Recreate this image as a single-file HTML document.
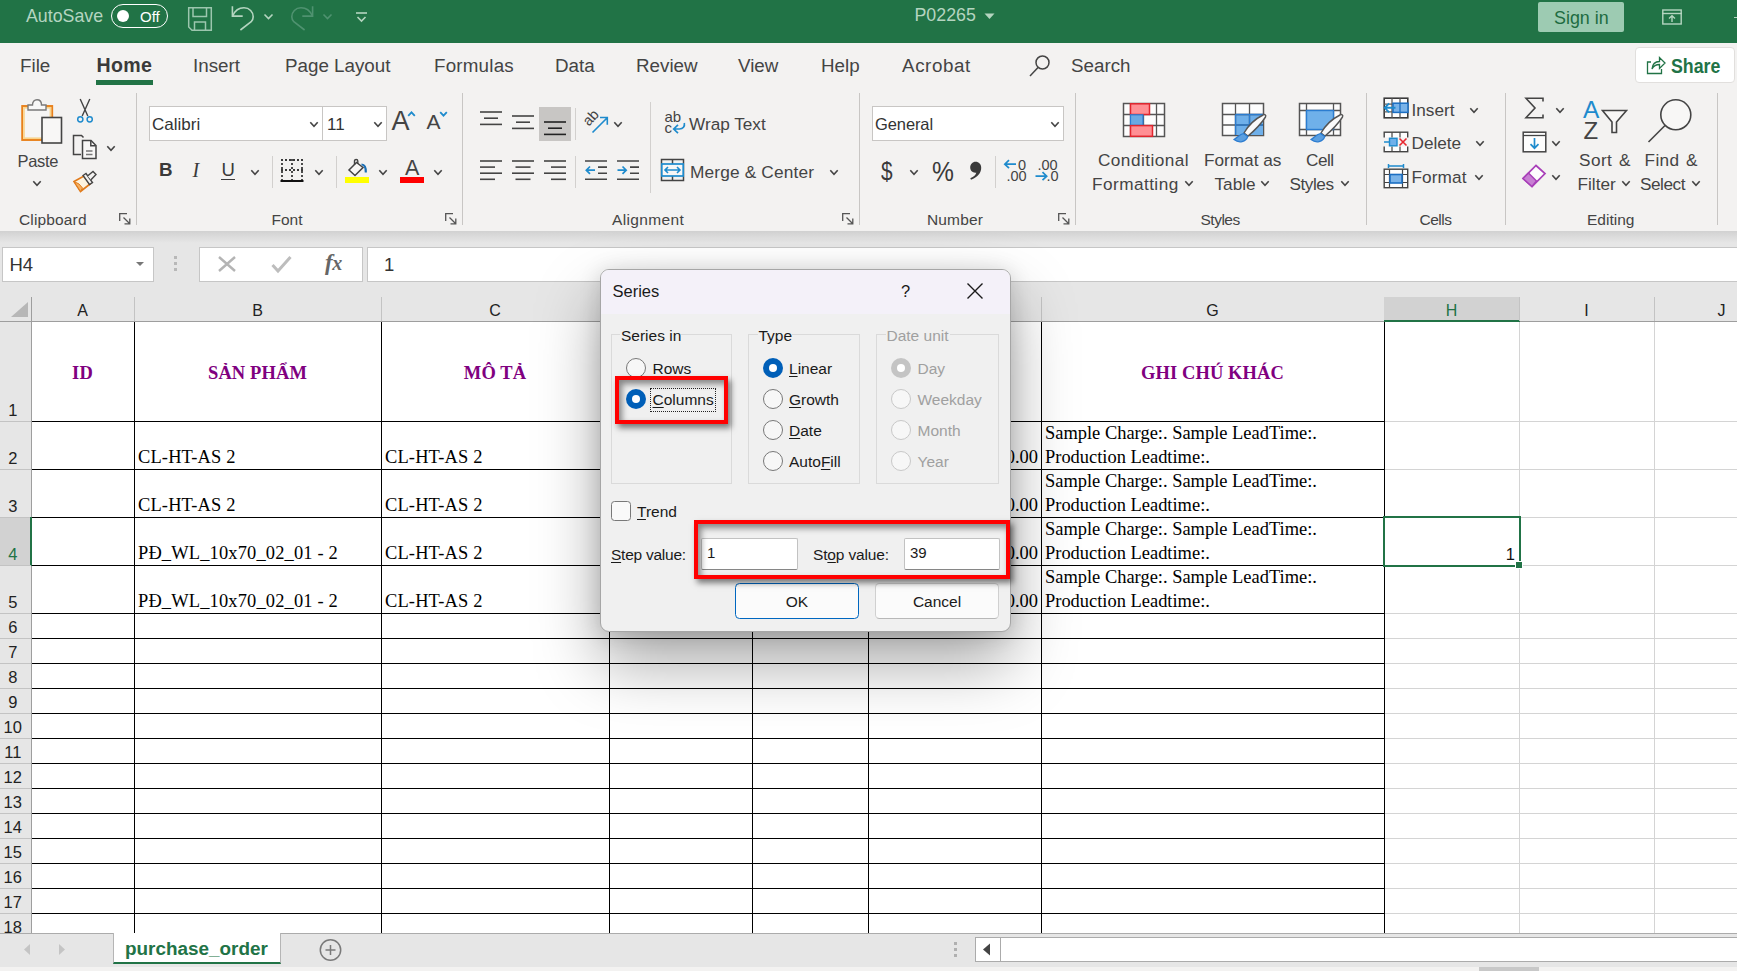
<!DOCTYPE html>
<html>
<head>
<meta charset="utf-8">
<title>Excel</title>
<style>
*{box-sizing:border-box;margin:0;padding:0}
html,body{width:1737px;height:971px;overflow:hidden;background:#e6e6e6;font-family:"Liberation Sans",sans-serif;color:#444}
.abs,.t,svg.i{position:absolute}
.t{white-space:nowrap;line-height:1}
#titlebar{position:absolute;left:0;top:0;width:1737px;height:43px;background:#217346}
#tabs{position:absolute;left:0;top:43px;width:1737px;height:47px;background:#f3f2f1}
#ribbon{position:absolute;left:0;top:90px;width:1737px;height:141px;background:#f3f2f1}
#ribshadow{position:absolute;left:0;top:231px;width:1737px;height:12px;background:linear-gradient(#d1d1d1,#dbdbdb 45%,#e6e6e6)}
.tab{position:absolute;top:57px;font-size:18.8px;color:#444;white-space:nowrap;line-height:1}
.rl{position:absolute;font-size:16.5px;color:#444;white-space:nowrap;line-height:1}
.gl{position:absolute;top:211.6px;font-size:15.5px;color:#444;white-space:nowrap;line-height:1}
.vsep{position:absolute;width:1px;background:#c8c6c4}
.ch{position:absolute;top:297px;height:24px;font-size:16px;color:#222;text-align:center;line-height:27px}
.rh{position:absolute;left:0;width:31px;font-size:16px;color:#222;text-align:left;padding-left:3px;line-height:1}
.hl{position:absolute;height:2px;background:#000}
.vl{position:absolute;width:2px;background:#000}
.gh{position:absolute;height:1px;background:#d4d4d4}
.gv{position:absolute;width:1px;background:#d4d4d4}
.ser{font-family:"Liberation Serif",serif;color:#000;font-size:18.45px}
.hdr{font-family:"Liberation Serif",serif;color:#800080;font-weight:bold;font-size:18.5px;letter-spacing:0.1px}
</style>
</head>
<body>
<div id="root" style="position:absolute;left:0;top:0;width:1737px;height:971px;overflow:hidden">
<div id="titlebar"></div>
<div id="tabs"></div>
<div id="ribbon"></div>
<div id="ribshadow"></div>
<!-- title bar -->
<div class="t" style="left:26px;top:8px;font-size:17.800px;color:#b5d5c0">AutoSave</div>
<div class="abs" style="left:111px;top:4px;width:57px;height:24px;border:1.5px solid #fff;border-radius:12px"></div>
<div class="abs" style="left:117px;top:10px;width:12px;height:12px;border-radius:6px;background:#fff"></div>
<div class="t" style="left:140px;top:9px;font-size:15px;color:#fff">Off</div>
<svg class="i" style="left:187px;top:6px" width="26" height="26" viewBox="0 0 26 26" fill="none" stroke="#9cc6ae" stroke-width="1.5"><path d="M1.7 1.7H24.3V24.3H5L1.7 21Z"/><path d="M6 1.7V10.5H19.5V1.7"/><path d="M7.5 24.3V16H18.5V24.3"/></svg>
<svg class="i" style="left:230px;top:5px" width="26" height="27" viewBox="0 0 26 27" fill="none" stroke="#b5d5c0" stroke-width="1.600"><path d="M2.400 1.300V11.100H12.700"/><path d="M2.800 10.800C5 5.500 9.500 2.800 14 2.800C19.500 2.800 23.200 7 23.200 11.800C23.200 13.800 22.400 15.500 21.200 16.700L10.400 25"/></svg>
<svg class="i" style="left:263px;top:13px" width="11" height="8" viewBox="0 0 11 8" fill="none" stroke="#b5d5c0" stroke-width="1.6"><path d="M1.5 1.5L5.5 5.5L9.5 1.5"/></svg>
<svg class="i" style="left:289px;top:5px" width="26" height="27" viewBox="0 0 26 27" fill="none" stroke="#4f9270" stroke-width="1.600"><path d="M23.600 1.300V11.100H13.300"/><path d="M23.200 10.800C21 5.500 16.500 2.800 12 2.800C6.500 2.800 2.800 7 2.800 11.800C2.800 13.800 3.600 15.500 4.800 16.700L15.600 25"/></svg>
<svg class="i" style="left:322px;top:13px" width="11" height="8" viewBox="0 0 11 8" fill="none" stroke="#4f9270" stroke-width="1.6"><path d="M1.5 1.5L5.5 5.5L9.5 1.5"/></svg>
<svg class="i" style="left:355px;top:11px" width="13" height="12" viewBox="0 0 13 12" fill="none" stroke="#b5d5c0" stroke-width="1.6"><path d="M1 2H12"/><path d="M2.5 6L6.5 10L10.5 6"/></svg>
<div class="t" style="left:914.500px;top:7px;font-size:17.800px;color:#b5d5c0">P02265</div>
<svg class="i" style="left:984px;top:13px" width="11" height="7" viewBox="0 0 11 7"><path d="M0.500 0.500H10.500L5.500 6Z" fill="#b5d5c0"/></svg>
<div class="abs" style="left:1538px;top:2px;width:86px;height:30px;background:#9dcbb2;border-radius:2px"></div>
<div class="t" style="left:1554px;top:9.500px;font-size:17.900px;color:#1e6c41">Sign in</div>
<svg class="i" style="left:1661px;top:9px" width="22" height="16" viewBox="0 0 22 16" fill="none" stroke="#b5d5c0" stroke-width="1.400"><rect x="1.800" y="1" width="18.400" height="14"/><path d="M1 4.500H21"/><path d="M11 13V7M8 9.500L11 6.800L14 9.500"/></svg>
<div class="abs" style="left:1734px;top:16.500px;width:3px;height:1.500px;background:#b5d5c0"></div>

<!-- tabs -->
<div class="tab" style="left:20px">File</div>
<div class="tab" style="left:96px;font-weight:bold;color:#3a3a3a;font-size:19.600px;top:56px;letter-spacing:0.300px;left:96.500px">Home</div>
<div class="abs" style="left:96px;top:80px;width:57px;height:5px;background:#217346"></div>
<div class="tab" style="left:193px">Insert</div>
<div class="tab" style="left:285px">Page Layout</div>
<div class="tab" style="left:434px;letter-spacing:0.200px">Formulas</div>
<div class="tab" style="left:555px">Data</div>
<div class="tab" style="left:636px">Review</div>
<div class="tab" style="left:738px">View</div>
<div class="tab" style="left:821px">Help</div>
<div class="tab" style="left:902px;letter-spacing:0.600px">Acrobat</div>
<svg class="i" style="left:1028px;top:54px" width="24" height="24" viewBox="0 0 24 24" fill="none" stroke="#444" stroke-width="1.5"><circle cx="14.500" cy="8.500" r="6.500"/><path d="M10 13.500L2 22"/></svg>
<div class="tab" style="left:1071px">Search</div>
<div class="abs" style="left:1635px;top:47px;width:100px;height:36px;background:#fff;border:1px solid #e1dfdd;border-radius:4px"></div>
<svg class="i" style="left:1645px;top:54px" width="22" height="22" viewBox="0 0 22 22" fill="none" stroke="#217346" stroke-width="1.300"><path d="M6 8H2.500V19.500H16.500V15"/><path d="M7 15C7.500 10 10.500 7.500 14.500 7.500V3.500L20 9L14.500 14.500V10.500C11 10.500 8.500 12 7 15Z"/></svg>
<div class="tab" style="left:1671px;font-weight:bold;color:#217346;font-size:19.500px;top:57px;transform:scaleX(0.910);transform-origin:left">Share</div>

<!-- clipboard -->
<svg class="i" style="left:20px;top:98px" width="44" height="47" viewBox="0 0 44 47" fill="none">
<rect x="2.2" y="8" width="30" height="34" fill="#fdf3df" stroke="#e8801a" stroke-width="1.9"/>
<rect x="4" y="9.800" width="26.400" height="30.400" fill="#f6f5f4" stroke="#f9d48c" stroke-width="1.6"/>
<path d="M8 12V7H12.500C12.500 3.500 14.500 1.800 17 1.800C19.500 1.800 21.500 3.500 21.500 7H26V12Z" fill="#f8f8f8" stroke="#7a7a7a" stroke-width="1.4"/>
<rect x="22" y="19.500" width="19.500" height="25.500" fill="#f8f7f6" stroke="#444" stroke-width="1.6"/>
</svg>
<div class="rl" style="left:17.5px;top:152.5px;font-size:16.5px;letter-spacing:-0.300px">Paste</div>
<svg class="i" style="left:32px;top:180px" width="10" height="7" viewBox="0 0 10 7" fill="none" stroke="#444" stroke-width="1.6"><path d="M1.3 1.3L5.0 5.3L8.7 1.3"/></svg>
<svg class="i" style="left:76px;top:98px" width="18" height="26" viewBox="0 0 18 26" fill="none">
<path d="M4.200 1L11.800 18M13.800 1L6.200 18" stroke="#444" stroke-width="1.4"/>
<circle cx="4.300" cy="21.300" r="2.600" stroke="#1e8bcd" stroke-width="1.5"/><circle cx="13.700" cy="21.300" r="2.600" stroke="#1e8bcd" stroke-width="1.5"/>
</svg>
<svg class="i" style="left:72px;top:134px" width="26" height="26" viewBox="0 0 26 26" fill="none" stroke="#444" stroke-width="1.5">
<path d="M9 20.500H1.500V1.500H9.500L11.500 3.500"/>
<path d="M10.500 6.500H19L24 11.500V24.500H10.500Z" fill="#f8f7f6"/><path d="M18.800 6.800V11.700H23.700"/>
<path d="M14 17H20.500M14 20.500H20.500" stroke="#777" stroke-width="1.3"/>
</svg>
<svg class="i" style="left:106px;top:145px" width="10" height="7" viewBox="0 0 10 7" fill="none" stroke="#444" stroke-width="1.6"><path d="M1.3 1.3L5.0 5.3L8.7 1.3"/></svg>
<svg class="i" style="left:72px;top:170px" width="27" height="24" viewBox="0 0 27 24" fill="none">
<path d="M2 11.500L12 6L18 14L8.500 21.500Z" fill="#fdf3df" stroke="#e07a1a" stroke-width="1.6"/>
<path d="M2 11.500L7 14L10.500 18L8.500 21.500Z" fill="#f5b062" stroke="#e07a1a" stroke-width="1"/>
<path d="M11 5.500L14 3.500L20.500 12.500L17.500 14.500Z" fill="#f3f2f1" stroke="#444" stroke-width="1.4"/>
<path d="M15.500 6L21 1.500L24 4.500L19 9.800" fill="#f3f2f1" stroke="#444" stroke-width="1.4"/>
</svg>
<div class="gl" style="left:19px;letter-spacing:0.150px">Clipboard</div>
<svg class="i" style="left:119px;top:213px" width="12" height="12" viewBox="0 0 12 12" fill="none" stroke="#555" stroke-width="1.3"><path d="M0.700 8V0.700H8"/><path d="M4.500 4.500L10.800 10.800M10.800 5.500V10.800H5.500"/></svg>
<div class="vsep" style="left:136px;top:93px;height:132px;background:#c8c6c4"></div>
<!-- font -->
<div class="abs" style="left:149px;top:106px;width:174px;height:35px;background:#fff;border:1px solid #c8c6c4"></div>
<div class="abs" style="left:322px;top:106px;width:65px;height:35px;background:#fff;border:1px solid #c8c6c4"></div>
<div class="rl" style="left:152px;top:116px;font-size:17px;color:#333">Calibri</div>
<svg class="i" style="left:309px;top:121px" width="10" height="7" viewBox="0 0 10 7" fill="none" stroke="#444" stroke-width="1.6"><path d="M1.3 1.3L5.0 5.3L8.7 1.3"/></svg>
<div class="rl" style="left:327px;top:116px;font-size:17px;color:#333">11</div>
<svg class="i" style="left:373px;top:121px" width="10" height="7" viewBox="0 0 10 7" fill="none" stroke="#444" stroke-width="1.6"><path d="M1.3 1.3L5.0 5.3L8.7 1.3"/></svg>
<div class="t" style="left:391.500px;top:107.500px;font-size:27px;color:#444">A</div>
<svg class="i" style="left:407px;top:110.500px" width="9" height="6" viewBox="0 0 9 6" fill="none" stroke="#1e8bcd" stroke-width="1.8"><path d="M1.200 4.800L4.500 1.300L7.800 4.800"/></svg>
<div class="t" style="left:426.500px;top:111px;font-size:21px;color:#444">A</div>
<svg class="i" style="left:439px;top:110.500px" width="9" height="6" viewBox="0 0 9 6" fill="none" stroke="#1e8bcd" stroke-width="1.8"><path d="M1.200 1.200L4.500 4.700L7.800 1.200"/></svg>
<div class="t" style="left:159px;top:161px;font-size:18.800px;font-weight:bold;color:#3a3a3a">B</div>
<div class="t" style="left:192.500px;top:160px;font-size:20px;font-style:italic;font-family:'Liberation Serif',serif;color:#3a3a3a">I</div>
<div class="t" style="left:221.500px;top:160.500px;font-size:18.500px;color:#3a3a3a">U</div>
<div class="abs" style="left:221px;top:178.500px;width:14px;height:1.500px;background:#3a3a3a"></div>
<svg class="i" style="left:250px;top:169px" width="10" height="7" viewBox="0 0 10 7" fill="none" stroke="#444" stroke-width="1.6"><path d="M1.3 1.3L5.0 5.3L8.7 1.3"/></svg>
<div class="vsep" style="left:272px;top:156px;height:32px;background:#d2d0ce"></div>
<svg class="i" style="left:280px;top:158px" width="25" height="25" viewBox="0 0 25 25" fill="none">
<path d="M1 2H23M2 1V23M22 1V23M12 1V23M1 12H23" stroke="#3a3a3a" stroke-width="1.800" stroke-dasharray="2 2"/>
<path d="M0.500 23H23.500" stroke="#111" stroke-width="2"/>
</svg>
<svg class="i" style="left:314px;top:169px" width="10" height="7" viewBox="0 0 10 7" fill="none" stroke="#444" stroke-width="1.6"><path d="M1.3 1.3L5.0 5.3L8.7 1.3"/></svg>
<div class="vsep" style="left:336px;top:156px;height:32px;background:#d2d0ce"></div>
<svg class="i" style="left:346px;top:158px" width="24" height="19" viewBox="0 0 24 19" fill="none">
<path d="M10.500 4.500L3 12L9 17.500L17 9.500L10.500 4.500Z" stroke="#444" stroke-width="1.500" fill="#f8f7f6"/>
<path d="M8.500 7V3C8.500 1 11.800 1 11.800 3V6" stroke="#444" stroke-width="1.400"/>
<path d="M15.500 6.500C18.500 6.500 20 9 19.800 14.500" stroke="#1b6fb5" stroke-width="2.200"/>
</svg>
<div class="abs" style="left:345px;top:177px;width:24px;height:6px;background:#ffff00"></div>
<svg class="i" style="left:378px;top:169px" width="10" height="7" viewBox="0 0 10 7" fill="none" stroke="#444" stroke-width="1.6"><path d="M1.3 1.3L5.0 5.3L8.7 1.3"/></svg>
<div class="t" style="left:405px;top:157.500px;font-size:21.500px;color:#444">A</div>
<div class="abs" style="left:400px;top:177px;width:24px;height:6px;background:#ff0000"></div>
<svg class="i" style="left:433px;top:169px" width="10" height="7" viewBox="0 0 10 7" fill="none" stroke="#444" stroke-width="1.6"><path d="M1.3 1.3L5.0 5.3L8.7 1.3"/></svg>
<div class="gl" style="left:271.5px;">Font</div>
<svg class="i" style="left:445px;top:213px" width="12" height="12" viewBox="0 0 12 12" fill="none" stroke="#555" stroke-width="1.3"><path d="M0.700 8V0.700H8"/><path d="M4.500 4.500L10.800 10.800M10.800 5.500V10.800H5.500"/></svg>
<div class="vsep" style="left:462px;top:93px;height:132px;background:#c8c6c4"></div>
<!-- alignment -->
<svg class="i" style="left:480px;top:110.7px" width="22" height="15" viewBox="0 0 22 15" stroke="#444" stroke-width="1.6"><path d="M0.0 1.0H22.0"/><path d="M4.0 7.2H18.0"/><path d="M0.0 13.4H22.0"/></svg>
<svg class="i" style="left:512px;top:114.5px" width="22" height="15" viewBox="0 0 22 15" stroke="#444" stroke-width="1.6"><path d="M0.0 1.0H22.0"/><path d="M4.0 7.2H18.0"/><path d="M0.0 13.4H22.0"/></svg>
<div class="abs" style="left:539px;top:107px;width:32px;height:34px;background:#c8c6c4"></div>
<svg class="i" style="left:544px;top:120.5px" width="22" height="15" viewBox="0 0 22 15" stroke="#222" stroke-width="1.6"><path d="M0.0 1.0H22.0"/><path d="M4.0 7.2H18.0"/><path d="M0.0 13.4H22.0"/></svg>
<div class="vsep" style="left:575px;top:108px;height:32px;background:#d2d0ce"></div>
<svg class="i" style="left:583px;top:109px" width="27" height="26" viewBox="0 0 27 26" fill="none">
<text transform="translate(5.800 17.800) rotate(-47)" font-family="Liberation Sans" font-size="14.500" fill="#444">ab</text>
<path d="M9.500 23.500L24 9M17 8.500H24.300V15.800" stroke="#1e8bcd" stroke-width="1.600"/>
</svg>
<svg class="i" style="left:613px;top:121px" width="10" height="7" viewBox="0 0 10 7" fill="none" stroke="#444" stroke-width="1.6"><path d="M1.3 1.3L5.0 5.3L8.7 1.3"/></svg>
<div class="vsep" style="left:650px;top:102px;height:91px;background:#d2d0ce"></div>
<svg class="i" style="left:663px;top:108px" width="24" height="28" viewBox="0 0 24 28" fill="none">
<text x="1.500" y="13.500" font-family="Liberation Sans" font-size="15" fill="#444">ab</text>
<text x="1.500" y="25" font-family="Liberation Sans" font-size="15" fill="#444">c</text>
<path d="M21.300 15C22 18.500 20 21 16.500 21H11M15 16.800L10.700 21L15 25.200" stroke="#1e8bcd" stroke-width="1.700"/>
</svg>
<div class="rl" style="left:689px;top:116px;font-size:17.2px;">Wrap Text</div>
<svg class="i" style="left:480px;top:159.8px" width="22" height="21" viewBox="0 0 22 21" stroke="#444" stroke-width="1.6"><path d="M0 1.0H22"/><path d="M0 7.1H15"/><path d="M0 13.2H22"/><path d="M0 19.3H15"/></svg>
<svg class="i" style="left:512px;top:159.8px" width="22" height="21" viewBox="0 0 22 21" stroke="#444" stroke-width="1.6"><path d="M0.0 1.0H22.0"/><path d="M3.5 7.1H18.5"/><path d="M0.0 13.2H22.0"/><path d="M3.5 19.3H18.5"/></svg>
<svg class="i" style="left:544px;top:159.8px" width="22" height="21" viewBox="0 0 22 21" stroke="#444" stroke-width="1.6"><path d="M0 1.0H22"/><path d="M7 7.1H22"/><path d="M0 13.2H22"/><path d="M7 19.3H22"/></svg>
<div class="vsep" style="left:575px;top:156px;height:32px;background:#d2d0ce"></div>
<svg class="i" style="left:585px;top:159.800px" width="22" height="21" viewBox="0 0 22 21" fill="none" stroke="#444" stroke-width="1.600">
<path d="M0 1H22M13 7.100H22M13 13.200H22M0 19.300H22"/><path d="M10 10.200H1.500M5 6.500L1.300 10.200L5 13.900" stroke="#1e8bcd" stroke-width="1.700"/></svg>
<svg class="i" style="left:617px;top:159.800px" width="22" height="21" viewBox="0 0 22 21" fill="none" stroke="#444" stroke-width="1.600">
<path d="M0 1H22M13 7.100H22M13 13.200H22M0 19.300H22"/><path d="M0.500 10.200H9M5.500 6.500L9.200 10.200L5.500 13.900" stroke="#1e8bcd" stroke-width="1.700"/></svg>
<svg class="i" style="left:660px;top:158px" width="25" height="24" viewBox="0 0 25 24" fill="none">
<rect x="1.500" y="1.500" width="22" height="21" stroke="#444" stroke-width="1.500"/>
<path d="M12.500 1.500V6M12.500 18V22.500" stroke="#444" stroke-width="1.500"/>
<rect x="1.800" y="6" width="21.400" height="12" fill="#f8f7f6" stroke="#1e8bcd" stroke-width="1.700"/>
<path d="M5 12H20M8 9L5 12L8 15M17 9L20 12L17 15" stroke="#1e8bcd" stroke-width="1.600"/>
</svg>
<div class="rl" style="left:690px;top:164px;font-size:17.3px;letter-spacing:0.150px">Merge &amp; Center</div>
<svg class="i" style="left:829px;top:169px" width="10" height="7" viewBox="0 0 10 7" fill="none" stroke="#444" stroke-width="1.6"><path d="M1.3 1.3L5.0 5.3L8.7 1.3"/></svg>
<div class="gl" style="left:612px;letter-spacing:0.350px">Alignment</div>
<svg class="i" style="left:842px;top:213px" width="12" height="12" viewBox="0 0 12 12" fill="none" stroke="#555" stroke-width="1.3"><path d="M0.700 8V0.700H8"/><path d="M4.500 4.500L10.800 10.800M10.800 5.500V10.800H5.500"/></svg>
<div class="vsep" style="left:859px;top:93px;height:132px;background:#c8c6c4"></div>
<!-- number -->
<div class="abs" style="left:872px;top:106px;width:192px;height:35px;background:#fff;border:1px solid #c8c6c4"></div>
<div class="rl" style="left:875px;top:116px;font-size:16.5px;color:#333;letter-spacing:-0.100px">General</div>
<svg class="i" style="left:1050px;top:121px" width="10" height="7" viewBox="0 0 10 7" fill="none" stroke="#444" stroke-width="1.6"><path d="M1.3 1.3L5.0 5.3L8.7 1.3"/></svg>
<div class="t" style="left:881px;top:157.500px;font-size:26px;color:#3a3a3a;transform:scaleX(0.800);transform-origin:left">$</div>
<svg class="i" style="left:909px;top:169px" width="10" height="7" viewBox="0 0 10 7" fill="none" stroke="#444" stroke-width="1.6"><path d="M1.3 1.3L5.0 5.3L8.7 1.3"/></svg>
<div class="t" style="left:931.500px;top:157.500px;font-size:28px;color:#3a3a3a;transform:scaleX(0.880);transform-origin:left">%</div>
<svg class="i" style="left:969px;top:161px" width="14" height="20" viewBox="0 0 14 20"><path d="M6.600 0.800C9.800 0.800 12.200 3.300 12.200 6.800C12.200 12 8.500 16.500 2 18.700L1.300 17.300C5 15.500 6.800 13.700 7.300 11.700C4 12.300 1.200 10 1.200 6.600C1.200 3.300 3.500 0.800 6.600 0.800Z" fill="#3a3a3a"/></svg>
<div class="vsep" style="left:995px;top:156px;height:32px;background:#d2d0ce"></div>
<svg class="i" style="left:1003px;top:157px" width="26" height="27" viewBox="0 0 26 27" fill="none">
<path d="M13 7.200H2M6 3.200L1.800 7.200L6 11.200" stroke="#1e8bcd" stroke-width="1.700"/>
<text x="15" y="12.500" font-family="Liberation Sans" font-size="14.500" fill="#444">0</text>
<text x="3.500" y="24.300" font-family="Liberation Sans" font-size="14.500" fill="#444">.00</text>
</svg>
<svg class="i" style="left:1034px;top:157px" width="28" height="27" viewBox="0 0 28 27" fill="none">
<text x="3.500" y="12.500" font-family="Liberation Sans" font-size="14.500" fill="#444">.00</text>
<path d="M1.500 19.200H12.500M8.500 15.200L12.700 19.200L8.500 23.200" stroke="#1e8bcd" stroke-width="1.700"/>
<text x="12.500" y="24.300" font-family="Liberation Sans" font-size="14.500" fill="#444">.0</text>
</svg>
<div class="gl" style="left:927px;letter-spacing:0.150px">Number</div>
<svg class="i" style="left:1058px;top:213px" width="12" height="12" viewBox="0 0 12 12" fill="none" stroke="#555" stroke-width="1.3"><path d="M0.700 8V0.700H8"/><path d="M4.500 4.500L10.800 10.800M10.800 5.500V10.800H5.500"/></svg>
<div class="vsep" style="left:1075px;top:93px;height:132px;background:#c8c6c4"></div>
<!-- styles -->
<svg class="i" style="left:1122px;top:102px" width="44" height="36" viewBox="0 0 44 36" fill="none">
<rect x="1.500" y="1.500" width="41" height="33" fill="#fdfdfd" stroke="#555" stroke-width="1.500"/>
<path d="M1.500 12.500H42.500M1.500 23.500H42.500M8.500 1.500V34.500M21.500 1.500V34.500M34.500 1.500V34.500" stroke="#555" stroke-width="1.300"/>
<rect x="8.500" y="1.800" width="19" height="10.700" fill="#ff8f94" stroke="#e0262e" stroke-width="1.500"/>
<rect x="8.500" y="12.800" width="12.500" height="10.500" fill="#6aa9e3" stroke="#2b7cd0" stroke-width="1.200"/>
<rect x="8.500" y="23.600" width="22" height="10.700" fill="#ff8f94" stroke="#e0262e" stroke-width="1.500"/>
</svg>
<div class="rl" style="left:1098px;top:151.6px;font-size:17.2px;letter-spacing:0.450px">Conditional</div>
<div class="rl" style="left:1092px;top:175.6px;font-size:17.2px;letter-spacing:0.450px">Formatting</div>
<svg class="i" style="left:1184px;top:179.5px" width="10" height="7" viewBox="0 0 10 7" fill="none" stroke="#444" stroke-width="1.6"><path d="M1.3 1.3L5.0 5.3L8.7 1.3"/></svg>
<svg class="i" style="left:1221px;top:102px" width="48" height="44" viewBox="0 0 48 44" fill="none">
<rect x="1.500" y="1.500" width="41" height="32" fill="#fdfdfd" stroke="#555" stroke-width="1.500"/>
<rect x="14.500" y="12.500" width="27.500" height="20.500" fill="#6fb0ea"/>
<path d="M1.500 12.500H42.500M1.500 23H42.500M14.500 1.500V33.500M28.500 1.500V33.500" stroke="#555" stroke-width="1.300"/>
<path d="M14.500 12.500H42M14.500 23H42M14.500 12.500V33M28.500 12.500V33" stroke="#2b7cd0" stroke-width="1.300"/>
<path d="M42 13C34 17 27 24 23 31L27 34C33 29 40 22 44.5 15C45.5 13 43.5 12 42 13Z" fill="#fafafa" stroke="#555" stroke-width="1.400"/>
<path d="M22.5 31.5C19 32 17 35 13 37.5C18 41.5 25 40 26.8 34.5Z" fill="#5b9fe0" stroke="#2b7cd0" stroke-width="1.200"/>
</svg>
<div class="rl" style="left:1204px;top:151.6px;font-size:17.2px;">Format as</div>
<div class="rl" style="left:1214.5px;top:175.6px;font-size:17.2px;">Table</div>
<svg class="i" style="left:1259.5px;top:179.5px" width="10" height="7" viewBox="0 0 10 7" fill="none" stroke="#444" stroke-width="1.6"><path d="M1.3 1.3L5.0 5.3L8.7 1.3"/></svg>
<svg class="i" style="left:1298px;top:102px" width="48" height="44" viewBox="0 0 48 44" fill="none">
<rect x="1.500" y="1.500" width="41" height="32" fill="#fdfdfd" stroke="#555" stroke-width="1.500"/>
<path d="M1.500 8.500H42.500M1.500 27.500H42.500M8.500 1.500V33.500M35.500 1.500V33.500" stroke="#555" stroke-width="1.300"/>
<rect x="8.500" y="8.500" width="27" height="19" fill="#6fb0ea" stroke="#2b7cd0" stroke-width="1.400"/>
<path d="M42 13C34 17 27 24 23 31L27 34C33 29 40 22 44.5 15C45.5 13 43.5 12 42 13Z" fill="#fafafa" stroke="#555" stroke-width="1.400"/>
<path d="M22.5 31.5C19 32 17 35 13 37.5C18 41.5 25 40 26.8 34.5Z" fill="#5b9fe0" stroke="#2b7cd0" stroke-width="1.200"/>
</svg>
<div class="rl" style="left:1306px;top:151.6px;font-size:17.2px;letter-spacing:-0.500px">Cell</div>
<div class="rl" style="left:1289.5px;top:175.6px;font-size:17.2px;letter-spacing:-0.450px">Styles</div>
<svg class="i" style="left:1339.5px;top:179.5px" width="10" height="7" viewBox="0 0 10 7" fill="none" stroke="#444" stroke-width="1.6"><path d="M1.3 1.3L5.0 5.3L8.7 1.3"/></svg>
<div class="gl" style="left:1200.5px;letter-spacing:-0.500px">Styles</div>
<div class="vsep" style="left:1366px;top:93px;height:132px;background:#c8c6c4"></div>
<!-- cells -->
<svg class="i" style="left:1383px;top:97px" width="26" height="22" viewBox="0 0 26 22" fill="none">
<rect x="1.200" y="1.200" width="23.600" height="19.600" stroke="#3b3b3b" stroke-width="1.600" fill="#fdfdfd"/>
<path d="M1.200 7.200H24.800M1.200 14.800H24.800M9 1.200V20.800M17 1.200V20.800" stroke="#5a5a5a" stroke-width="1.300"/>
<rect x="10" y="6.200" width="15" height="9.200" fill="#7ab3e8" stroke="#1b6ec2" stroke-width="1.500"/>
<path d="M17 6.200V15.400" stroke="#1b6ec2" stroke-width="1.300"/>
<path d="M12.500 10.800H2M6.200 6.300L1.700 10.800L6.200 15.300" stroke="#1e8bcd" stroke-width="1.900"/>
</svg>
<div class="rl" style="left:1411.5px;top:101.5px;font-size:17.2px;">Insert</div>
<svg class="i" style="left:1469px;top:106.5px" width="10" height="7" viewBox="0 0 10 7" fill="none" stroke="#444" stroke-width="1.6"><path d="M1.3 1.3L5.0 5.3L8.7 1.3"/></svg>
<svg class="i" style="left:1383px;top:131px" width="26" height="22" viewBox="0 0 26 22" fill="none">
<rect x="1.200" y="1.200" width="23.500" height="19.500" stroke="#444" stroke-width="1.400" fill="#fdfdfd"/>
<path d="M1.200 7.500H24.700M1.200 14.500H24.700M9 1.200V20.700M17 1.200V20.700" stroke="#444" stroke-width="1.200"/>
<rect x="0" y="6.500" width="26" height="9" fill="#f3f2f1"/>
<rect x="6.500" y="7.300" width="7.500" height="7.500" fill="#6fb0ea" stroke="#1e8bcd" stroke-width="1.400"/>
<path d="M1 11H6.500" stroke="#1e8bcd" stroke-width="1.500"/>
<path d="M16.500 7.500L23.500 14.500M23.500 7.500L16.500 14.500" stroke="#e8262e" stroke-width="1.600"/>
</svg>
<div class="rl" style="left:1411.5px;top:135px;font-size:17.2px;">Delete</div>
<svg class="i" style="left:1475px;top:140px" width="10" height="7" viewBox="0 0 10 7" fill="none" stroke="#444" stroke-width="1.6"><path d="M1.3 1.3L5.0 5.3L8.7 1.3"/></svg>
<svg class="i" style="left:1383px;top:162.500px" width="26" height="26" viewBox="0 0 26 26" fill="none">
<path d="M5.500 1V5M20.500 1V5M5.500 3H20.500" stroke="#1e8bcd" stroke-width="1.500"/>
<rect x="1.200" y="6.200" width="23.500" height="18.500" stroke="#444" stroke-width="1.400" fill="#fdfdfd"/>
<path d="M1.200 11.500H24.700M1.200 19.500H24.700M6.500 6.200V24.700M19.500 6.200V24.700" stroke="#444" stroke-width="1.200"/>
<rect x="7" y="11.500" width="12" height="8.500" fill="#7ab3e8" stroke="#1b6ec2" stroke-width="1.600"/>
</svg>
<div class="rl" style="left:1411.5px;top:169px;font-size:17.2px;letter-spacing:0.100px">Format</div>
<svg class="i" style="left:1474px;top:174px" width="10" height="7" viewBox="0 0 10 7" fill="none" stroke="#444" stroke-width="1.6"><path d="M1.3 1.3L5.0 5.3L8.7 1.3"/></svg>
<div class="gl" style="left:1419.5px;letter-spacing:-0.500px">Cells</div>
<div class="vsep" style="left:1505px;top:93px;height:132px;background:#c8c6c4"></div>
<!-- editing -->
<svg class="i" style="left:1524px;top:97px" width="21" height="22" viewBox="0 0 21 22" fill="none" stroke="#444" stroke-width="1.600"><path d="M19 4.500V1.200H2L11 11L2 20.800H19V17.500"/></svg>
<svg class="i" style="left:1555px;top:106.5px" width="10" height="7" viewBox="0 0 10 7" fill="none" stroke="#444" stroke-width="1.6"><path d="M1.3 1.3L5.0 5.3L8.7 1.3"/></svg>
<svg class="i" style="left:1522px;top:131px" width="25" height="22" viewBox="0 0 25 22" fill="none">
<rect x="1.200" y="1.200" width="22.600" height="19.600" stroke="#444" stroke-width="1.500" fill="#fdfdfd"/><path d="M1.200 4.500H23.800" stroke="#444" stroke-width="1.300"/>
<path d="M12.500 7V17M8.500 13.200L12.500 17.200L16.500 13.200" stroke="#1e8bcd" stroke-width="1.700"/>
</svg>
<svg class="i" style="left:1551px;top:140px" width="10" height="7" viewBox="0 0 10 7" fill="none" stroke="#444" stroke-width="1.6"><path d="M1.3 1.3L5.0 5.3L8.7 1.3"/></svg>
<svg class="i" style="left:1521px;top:164px" width="26" height="24" viewBox="0 0 26 24" fill="none">
<path d="M15 1.500L24 9.500L11 22.500L2 14.500Z" fill="#fdfdfd" stroke="#a83fb8" stroke-width="1.700"/>
<path d="M7.500 9L2 14.500L11 22.500L15.500 17Z" fill="#c77fd3" stroke="#a83fb8" stroke-width="1.500"/>
</svg>
<svg class="i" style="left:1551px;top:174px" width="10" height="7" viewBox="0 0 10 7" fill="none" stroke="#444" stroke-width="1.6"><path d="M1.3 1.3L5.0 5.3L8.7 1.3"/></svg>
<div class="t" style="left:1583px;top:98px;font-size:24.500px;color:#1e8bcd">A</div>
<div class="t" style="left:1583.500px;top:119px;font-size:24px;color:#444">Z</div>
<svg class="i" style="left:1601px;top:109px" width="27" height="26" viewBox="0 0 27 26" fill="#f8f7f6" stroke="#444" stroke-width="1.600"><path d="M1.500 1.500H25.500L15.500 13V23.500H11V13Z"/></svg>
<div class="rl" style="left:1579px;top:151.6px;font-size:17.2px;word-spacing:1.500px;letter-spacing:0.450px">Sort &amp;</div>
<div class="rl" style="left:1577.5px;top:175.6px;font-size:17.2px;">Filter</div>
<svg class="i" style="left:1620.5px;top:179.5px" width="10" height="7" viewBox="0 0 10 7" fill="none" stroke="#444" stroke-width="1.6"><path d="M1.3 1.3L5.0 5.3L8.7 1.3"/></svg>
<svg class="i" style="left:1646px;top:97px" width="48" height="48" viewBox="0 0 48 48" fill="none" stroke="#444" stroke-width="1.600"><circle cx="29.800" cy="17.800" r="15" fill="#f8f7f6"/><path d="M19 28.500L2.500 45"/></svg>
<div class="rl" style="left:1644.5px;top:151.6px;font-size:17.2px;word-spacing:1.200px;letter-spacing:0.400px">Find &amp;</div>
<div class="rl" style="left:1640px;top:175.6px;font-size:17.2px;letter-spacing:-0.450px">Select</div>
<svg class="i" style="left:1690.5px;top:179.5px" width="10" height="7" viewBox="0 0 10 7" fill="none" stroke="#444" stroke-width="1.6"><path d="M1.3 1.3L5.0 5.3L8.7 1.3"/></svg>
<div class="gl" style="left:1587px;">Editing</div>
<div class="vsep" style="left:1717px;top:93px;height:132px;background:#c8c6c4"></div>


<!-- formula bar -->
<div class="abs" style="left:2px;top:247px;width:152px;height:35px;background:#fff;border:1px solid #c6c6c6"></div>
<div class="t" style="left:9.500px;top:255.500px;font-size:18.500px;color:#333">H4</div>
<svg class="i" style="left:135px;top:261px" width="10" height="6" viewBox="0 0 10 6"><path d="M1 1H9L5 5Z" fill="#777"/></svg>
<div class="abs" style="left:174px;top:256px;width:3px;height:3px;background:#b8b8b8"></div>
<div class="abs" style="left:174px;top:262px;width:3px;height:3px;background:#b8b8b8"></div>
<div class="abs" style="left:174px;top:268px;width:3px;height:3px;background:#b8b8b8"></div>
<div class="abs" style="left:199px;top:247px;width:164px;height:35px;background:#fff;border:1px solid #c6c6c6"></div>
<svg class="i" style="left:217px;top:255px" width="20" height="18" viewBox="0 0 20 18" fill="none" stroke="#b4b4b4" stroke-width="2.400"><path d="M2 2L18 16M18 2L2 16"/></svg>
<svg class="i" style="left:271px;top:255px" width="21" height="19" viewBox="0 0 21 19" fill="none" stroke="#bdbdbd" stroke-width="3"><path d="M1.500 10L7 16L19.500 2"/></svg>
<div class="t" style="left:325px;top:251px;font-size:23px;font-style:italic;font-family:'Liberation Serif',serif;color:#666;font-weight:bold;letter-spacing:-0.500px">f<span style="font-size:20px">x</span></div>
<div class="abs" style="left:367px;top:247px;width:1380px;height:35px;background:#fff;border:1px solid #c6c6c6"></div>
<div class="t" style="left:384px;top:255.500px;font-size:18.500px;color:#333">1</div>
<!-- grid -->
<div class="abs" style="left:31px;top:322px;width:1706px;height:611px;background:#fff"></div>
<div class="abs" style="left:0;top:297px;width:1737px;height:24px;background:#e6e6e6"></div>
<div class="abs" style="left:0;top:321px;width:1737px;height:1px;background:#9e9e9e"></div>
<div class="abs" style="left:0;top:322px;width:31px;height:611px;background:#e6e6e6"></div>
<div class="abs" style="left:31px;top:297px;width:1px;height:636px;background:#9e9e9e"></div>
<svg class="i" style="left:10px;top:301px" width="19" height="17" viewBox="0 0 19 17"><path d="M18 1V16H1Z" fill="#b7b7b7"/></svg>
<div class="ch" style="left:31px;width:103px;">A</div>
<div class="abs" style="left:134px;top:297px;width:1px;height:24px;background:#c3c3c3"></div>
<div class="ch" style="left:134px;width:247px;">B</div>
<div class="abs" style="left:381px;top:297px;width:1px;height:24px;background:#c3c3c3"></div>
<div class="ch" style="left:381px;width:228px;">C</div>
<div class="abs" style="left:609px;top:297px;width:1px;height:24px;background:#c3c3c3"></div>
<div class="ch" style="left:609px;width:143px;">D</div>
<div class="abs" style="left:752px;top:297px;width:1px;height:24px;background:#c3c3c3"></div>
<div class="ch" style="left:752px;width:116px;">E</div>
<div class="abs" style="left:868px;top:297px;width:1px;height:24px;background:#c3c3c3"></div>
<div class="ch" style="left:868px;width:173px;">F</div>
<div class="abs" style="left:1041px;top:297px;width:1px;height:24px;background:#c3c3c3"></div>
<div class="ch" style="left:1041px;width:343px;">G</div>
<div class="abs" style="left:1384px;top:297px;width:1px;height:24px;background:#c3c3c3"></div>
<div class="abs" style="left:1384px;top:297px;width:135px;height:24px;background:#d2d2d2"></div>
<div class="abs" style="left:1384px;top:320px;width:136px;height:2px;background:#217346"></div>
<div class="ch" style="left:1384px;width:135px;color:#217346;">H</div>
<div class="abs" style="left:1519px;top:297px;width:1px;height:24px;background:#c3c3c3"></div>
<div class="ch" style="left:1519px;width:135px;">I</div>
<div class="abs" style="left:1654px;top:297px;width:1px;height:24px;background:#c3c3c3"></div>
<div class="ch" style="left:1654px;width:135px;">J</div>
<div class="abs" style="left:0;top:421px;width:31px;height:1px;background:#c3c3c3"></div>
<div class="t" style="left:0;width:25.600px;text-align:center;top:401.6px;font-size:16.500px;color:#222">1</div>
<div class="abs" style="left:0;top:469px;width:31px;height:1px;background:#c3c3c3"></div>
<div class="t" style="left:0;width:25.600px;text-align:center;top:449.6px;font-size:16.500px;color:#222">2</div>
<div class="abs" style="left:0;top:517px;width:31px;height:1px;background:#c3c3c3"></div>
<div class="t" style="left:0;width:25.600px;text-align:center;top:497.6px;font-size:16.500px;color:#222">3</div>
<div class="abs" style="left:0;top:518px;width:31px;height:47px;background:#d2d2d2"></div>
<div class="abs" style="left:30px;top:517px;width:2px;height:49px;background:#217346"></div>
<div class="abs" style="left:0;top:565px;width:31px;height:1px;background:#c3c3c3"></div>
<div class="t" style="left:0;width:25.600px;text-align:center;top:545.6px;font-size:16.500px;color:#217346">4</div>
<div class="abs" style="left:0;top:613px;width:31px;height:1px;background:#c3c3c3"></div>
<div class="t" style="left:0;width:25.600px;text-align:center;top:593.6px;font-size:16.500px;color:#222">5</div>
<div class="abs" style="left:0;top:638px;width:31px;height:1px;background:#c3c3c3"></div>
<div class="t" style="left:0;width:25.600px;text-align:center;top:618.6px;font-size:16.500px;color:#222">6</div>
<div class="abs" style="left:0;top:663px;width:31px;height:1px;background:#c3c3c3"></div>
<div class="t" style="left:0;width:25.600px;text-align:center;top:643.6px;font-size:16.500px;color:#222">7</div>
<div class="abs" style="left:0;top:688px;width:31px;height:1px;background:#c3c3c3"></div>
<div class="t" style="left:0;width:25.600px;text-align:center;top:668.6px;font-size:16.500px;color:#222">8</div>
<div class="abs" style="left:0;top:713px;width:31px;height:1px;background:#c3c3c3"></div>
<div class="t" style="left:0;width:25.600px;text-align:center;top:693.6px;font-size:16.500px;color:#222">9</div>
<div class="abs" style="left:0;top:738px;width:31px;height:1px;background:#c3c3c3"></div>
<div class="t" style="left:0;width:25.600px;text-align:center;top:718.6px;font-size:16.500px;color:#222">10</div>
<div class="abs" style="left:0;top:763px;width:31px;height:1px;background:#c3c3c3"></div>
<div class="t" style="left:0;width:25.600px;text-align:center;top:743.6px;font-size:16.500px;color:#222">11</div>
<div class="abs" style="left:0;top:788px;width:31px;height:1px;background:#c3c3c3"></div>
<div class="t" style="left:0;width:25.600px;text-align:center;top:768.6px;font-size:16.500px;color:#222">12</div>
<div class="abs" style="left:0;top:813px;width:31px;height:1px;background:#c3c3c3"></div>
<div class="t" style="left:0;width:25.600px;text-align:center;top:793.6px;font-size:16.500px;color:#222">13</div>
<div class="abs" style="left:0;top:838px;width:31px;height:1px;background:#c3c3c3"></div>
<div class="t" style="left:0;width:25.600px;text-align:center;top:818.6px;font-size:16.500px;color:#222">14</div>
<div class="abs" style="left:0;top:863px;width:31px;height:1px;background:#c3c3c3"></div>
<div class="t" style="left:0;width:25.600px;text-align:center;top:843.6px;font-size:16.500px;color:#222">15</div>
<div class="abs" style="left:0;top:888px;width:31px;height:1px;background:#c3c3c3"></div>
<div class="t" style="left:0;width:25.600px;text-align:center;top:868.6px;font-size:16.500px;color:#222">16</div>
<div class="abs" style="left:0;top:913px;width:31px;height:1px;background:#c3c3c3"></div>
<div class="t" style="left:0;width:25.600px;text-align:center;top:893.6px;font-size:16.500px;color:#222">17</div>
<div class="abs" style="left:0;top:938px;width:31px;height:1px;background:#c3c3c3"></div>
<div class="t" style="left:0;width:25.600px;text-align:center;top:918.6px;font-size:16.500px;color:#222">18</div>
<div class="gh" style="left:1385px;top:421px;width:352px"></div>
<div class="gh" style="left:1385px;top:469px;width:352px"></div>
<div class="gh" style="left:1385px;top:517px;width:352px"></div>
<div class="gh" style="left:1385px;top:565px;width:352px"></div>
<div class="gh" style="left:1385px;top:613px;width:352px"></div>
<div class="gh" style="left:1385px;top:638px;width:352px"></div>
<div class="gh" style="left:1385px;top:663px;width:352px"></div>
<div class="gh" style="left:1385px;top:688px;width:352px"></div>
<div class="gh" style="left:1385px;top:713px;width:352px"></div>
<div class="gh" style="left:1385px;top:738px;width:352px"></div>
<div class="gh" style="left:1385px;top:763px;width:352px"></div>
<div class="gh" style="left:1385px;top:788px;width:352px"></div>
<div class="gh" style="left:1385px;top:813px;width:352px"></div>
<div class="gh" style="left:1385px;top:838px;width:352px"></div>
<div class="gh" style="left:1385px;top:863px;width:352px"></div>
<div class="gh" style="left:1385px;top:888px;width:352px"></div>
<div class="gh" style="left:1385px;top:913px;width:352px"></div>
<div class="gv" style="left:1519px;top:322px;height:611px"></div>
<div class="gv" style="left:1654px;top:322px;height:611px"></div>
<div class="abs" style="left:32px;top:421px;width:1353px;height:1px;background:#000"></div>
<div class="abs" style="left:32px;top:469px;width:1353px;height:1px;background:#000"></div>
<div class="abs" style="left:32px;top:517px;width:1353px;height:1px;background:#000"></div>
<div class="abs" style="left:32px;top:565px;width:1353px;height:1px;background:#000"></div>
<div class="abs" style="left:32px;top:613px;width:1353px;height:1px;background:#000"></div>
<div class="abs" style="left:32px;top:638px;width:1353px;height:1px;background:#000"></div>
<div class="abs" style="left:32px;top:663px;width:1353px;height:1px;background:#000"></div>
<div class="abs" style="left:32px;top:688px;width:1353px;height:1px;background:#000"></div>
<div class="abs" style="left:32px;top:713px;width:1353px;height:1px;background:#000"></div>
<div class="abs" style="left:32px;top:738px;width:1353px;height:1px;background:#000"></div>
<div class="abs" style="left:32px;top:763px;width:1353px;height:1px;background:#000"></div>
<div class="abs" style="left:32px;top:788px;width:1353px;height:1px;background:#000"></div>
<div class="abs" style="left:32px;top:813px;width:1353px;height:1px;background:#000"></div>
<div class="abs" style="left:32px;top:838px;width:1353px;height:1px;background:#000"></div>
<div class="abs" style="left:32px;top:863px;width:1353px;height:1px;background:#000"></div>
<div class="abs" style="left:32px;top:888px;width:1353px;height:1px;background:#000"></div>
<div class="abs" style="left:32px;top:913px;width:1353px;height:1px;background:#000"></div>
<div class="abs" style="left:134px;top:322px;width:1px;height:611px;background:#000"></div>
<div class="abs" style="left:381px;top:322px;width:1px;height:611px;background:#000"></div>
<div class="abs" style="left:609px;top:322px;width:1px;height:611px;background:#000"></div>
<div class="abs" style="left:752px;top:322px;width:1px;height:611px;background:#000"></div>
<div class="abs" style="left:868px;top:322px;width:1px;height:611px;background:#000"></div>
<div class="abs" style="left:1041px;top:322px;width:1px;height:611px;background:#000"></div>
<div class="abs" style="left:1384px;top:322px;width:1px;height:611px;background:#000"></div>
<div class="t hdr" style="left:31px;width:103px;text-align:center;top:363.800px">ID</div>
<div class="t hdr" style="left:134px;width:247px;text-align:center;top:363.800px">SẢN PHẨM</div>
<div class="t hdr" style="left:381px;width:228px;text-align:center;top:363.800px">MÔ TẢ</div>
<div class="t hdr" style="left:1041px;width:343px;text-align:center;top:363.800px">GHI CHÚ KHÁC</div>
<div class="t hdr" style="left:609px;width:143px;text-align:center;top:363.800px">SỐ LƯỢNG</div>
<div class="t hdr" style="left:752px;width:116px;text-align:center;top:363.800px">ĐƠN VỊ</div>
<div class="t hdr" style="left:868px;width:173px;text-align:center;top:363.800px">ĐƠN GIÁ</div>
<div class="t ser" style="left:138px;top:447.5px;letter-spacing:0.150px">CL-HT-AS 2</div>
<div class="t ser" style="left:385px;top:447.5px;letter-spacing:0.150px">CL-HT-AS 2</div>
<div class="t ser" style="left:868px;width:170px;text-align:right;top:447.5px">0.00</div>
<div class="t ser" style="left:1045px;top:423.5px">Sample Charge:. Sample LeadTime:.</div>
<div class="t ser" style="left:1045px;top:447.5px">Production Leadtime:.</div>
<div class="t ser" style="left:138px;top:495.5px;letter-spacing:0.150px">CL-HT-AS 2</div>
<div class="t ser" style="left:385px;top:495.5px;letter-spacing:0.150px">CL-HT-AS 2</div>
<div class="t ser" style="left:868px;width:170px;text-align:right;top:495.5px">0.00</div>
<div class="t ser" style="left:1045px;top:471.5px">Sample Charge:. Sample LeadTime:.</div>
<div class="t ser" style="left:1045px;top:495.5px">Production Leadtime:.</div>
<div class="t ser" style="left:138px;top:543.5px;letter-spacing:0.150px">PĐ_WL_10x70_02_01 - 2</div>
<div class="t ser" style="left:385px;top:543.5px;letter-spacing:0.150px">CL-HT-AS 2</div>
<div class="t ser" style="left:868px;width:170px;text-align:right;top:543.5px">0.00</div>
<div class="t ser" style="left:1045px;top:519.5px">Sample Charge:. Sample LeadTime:.</div>
<div class="t ser" style="left:1045px;top:543.5px">Production Leadtime:.</div>
<div class="t ser" style="left:138px;top:591.5px;letter-spacing:0.150px">PĐ_WL_10x70_02_01 - 2</div>
<div class="t ser" style="left:385px;top:591.5px;letter-spacing:0.150px">CL-HT-AS 2</div>
<div class="t ser" style="left:868px;width:170px;text-align:right;top:591.5px">0.00</div>
<div class="t ser" style="left:1045px;top:567.5px">Sample Charge:. Sample LeadTime:.</div>
<div class="t ser" style="left:1045px;top:591.5px">Production Leadtime:.</div>
<div class="abs" style="left:1383px;top:516px;width:138px;height:51px;border:2px solid #217346"></div>
<div class="abs" style="left:1515px;top:561px;width:8px;height:8px;background:#fff"></div>
<div class="abs" style="left:1516px;top:562px;width:6px;height:6px;background:#217346"></div>
<div class="t" style="left:1460px;width:55px;text-align:right;top:545.500px;font-size:16.500px;color:#111">1</div>

<!-- sheet bar -->
<div class="abs" style="left:0;top:933px;width:1737px;height:34px;background:#e6e6e6;border-top:1px solid #ababab"></div>
<div class="abs" style="left:0;top:967px;width:1737px;height:4px;background:#f3f2f1"></div>
<div class="abs" style="left:1479px;top:967px;width:60px;height:4px;background:#c8c8c8"></div>
<svg class="i" style="left:23px;top:943px" width="8" height="13" viewBox="0 0 8 13"><path d="M7 1V12L1 6.500Z" fill="#c4c4c4"/></svg>
<svg class="i" style="left:58px;top:943px" width="8" height="13" viewBox="0 0 8 13"><path d="M1 1V12L7 6.500Z" fill="#c4c4c4"/></svg>
<div class="abs" style="left:113px;top:933px;width:168px;height:31px;background:#fff;border-left:1px solid #b5b5b5;border-right:1px solid #b5b5b5;border-bottom:2px solid #217346"></div>
<div class="t" style="left:125px;top:939.500px;font-size:18.900px;font-weight:bold;color:#217346">purchase_order</div>
<svg class="i" style="left:318px;top:938px" width="25" height="25" viewBox="0 0 25 25" fill="none" stroke="#7a7a7a" stroke-width="1.500"><circle cx="12.500" cy="12" r="10.200"/><path d="M7.500 12H17.500M12.500 7V17"/></svg>
<div class="abs" style="left:954px;top:942px;width:3px;height:3px;background:#b0b0b0"></div>
<div class="abs" style="left:954px;top:948px;width:3px;height:3px;background:#b0b0b0"></div>
<div class="abs" style="left:954px;top:954px;width:3px;height:3px;background:#b0b0b0"></div>
<div class="abs" style="left:975px;top:937px;width:770px;height:25px;background:#fff;border:1px solid #ababab"></div>
<div class="abs" style="left:1000px;top:937px;width:1px;height:25px;background:#ababab"></div>
<svg class="i" style="left:982px;top:943px" width="9" height="13" viewBox="0 0 9 13"><path d="M8 0.500V12.500L1 6.500Z" fill="#444"/></svg>

<!-- dialog -->
<div id="dlg" style="position:absolute;left:600px;top:269px;width:411px;height:363px;background:#f0f0f0;border:1px solid #a6a6a6;border-radius:9px;box-shadow:0 32px 64px rgba(0,0,0,0.34),0 2px 21px rgba(0,0,0,0.15);overflow:visible">
<div class="abs" style="left:0;top:0;width:409px;height:44px;background:#f4f1f9;border-radius:8px 8px 0 0"></div>
<div class="t" style="left:11.5px;top:13px;font-size:16.5px;color:#1a1a1a;">Series</div>
<div class="t" style="left:300px;top:13px;font-size:16.5px;color:#1a1a1a;">?</div>
<svg class="i" style="left:365px;top:12px" width="18" height="18" viewBox="0 0 18 18" fill="none" stroke="#1a1a1a" stroke-width="1.400"><path d="M1.500 1.500L16.500 16.500M16.500 1.500L1.500 16.500"/></svg>
<div class="abs" style="left:10px;top:64px;width:121px;height:150px;border:1px solid #dadada"></div>
<div class="abs" style="left:19px;top:59px;width:60.5px;height:15px;background:#f0f0f0"></div>
<div class="t" style="left:20px;top:57.5px;font-size:15.5px;color:#1a1a1a;">Series in</div>
<div class="abs" style="left:147px;top:64px;width:112px;height:150px;border:1px solid #dadada"></div>
<div class="abs" style="left:156.5px;top:59px;width:34.5px;height:15px;background:#f0f0f0"></div>
<div class="t" style="left:157.5px;top:57.5px;font-size:15.5px;color:#1a1a1a;">Type</div>
<div class="abs" style="left:275px;top:64px;width:123px;height:150px;border:1px solid #dadada"></div>
<div class="abs" style="left:284.5px;top:59px;width:64.5px;height:15px;background:#f0f0f0"></div>
<div class="t" style="left:285.5px;top:57.5px;font-size:15.5px;color:#a0a0a0;">Date unit</div>
<div class="abs" style="left:25px;top:88px;width:20px;height:20px;border-radius:10px;background:#f7f7f7;border:1px solid #787878"></div>
<div class="t" style="left:51.5px;top:91px;font-size:15.5px;color:#1a1a1a;">Rows</div>
<div class="abs" style="left:25px;top:119px;width:20px;height:20px;border-radius:10px;background:#005fb8"></div>
<div class="abs" style="left:31px;top:125px;width:8px;height:8px;border-radius:4px;background:#fff"></div>
<div class="t" style="left:51.5px;top:122px;font-size:15.5px;color:#1a1a1a;"><span style="text-decoration:underline;text-underline-offset:2px">C</span>olumns</div>
<div class="abs" style="left:49px;top:118px;width:66px;height:24px;border:1px dotted #222"></div>
<div class="abs" style="left:162px;top:88px;width:20px;height:20px;border-radius:10px;background:#005fb8"></div>
<div class="abs" style="left:168px;top:94px;width:8px;height:8px;border-radius:4px;background:#fff"></div>
<div class="t" style="left:188px;top:91px;font-size:15.5px;color:#1a1a1a;"><span style="text-decoration:underline;text-underline-offset:2px">L</span>inear</div>
<div class="abs" style="left:162px;top:119px;width:20px;height:20px;border-radius:10px;background:#f7f7f7;border:1px solid #787878"></div>
<div class="t" style="left:188px;top:122px;font-size:15.5px;color:#1a1a1a;"><span style="text-decoration:underline;text-underline-offset:2px">G</span>rowth</div>
<div class="abs" style="left:162px;top:150px;width:20px;height:20px;border-radius:10px;background:#f7f7f7;border:1px solid #787878"></div>
<div class="t" style="left:188px;top:153px;font-size:15.5px;color:#1a1a1a;"><span style="text-decoration:underline;text-underline-offset:2px">D</span>ate</div>
<div class="abs" style="left:162px;top:181px;width:20px;height:20px;border-radius:10px;background:#f7f7f7;border:1px solid #787878"></div>
<div class="t" style="left:188px;top:184px;font-size:15.5px;color:#1a1a1a;">Auto<span style="text-decoration:underline;text-underline-offset:2px">F</span>ill</div>
<div class="abs" style="left:290px;top:88px;width:20px;height:20px;border-radius:10px;background:#c4c4c4"></div>
<div class="abs" style="left:296px;top:94px;width:8px;height:8px;border-radius:4px;background:#fff"></div>
<div class="t" style="left:316.5px;top:91px;font-size:15.5px;color:#a0a0a0;">Day</div>
<div class="abs" style="left:290px;top:119px;width:20px;height:20px;border-radius:10px;background:#f7f7f7;border:1px solid #c8c8c8"></div>
<div class="t" style="left:316.5px;top:122px;font-size:15.5px;color:#a0a0a0;">Weekday</div>
<div class="abs" style="left:290px;top:150px;width:20px;height:20px;border-radius:10px;background:#f7f7f7;border:1px solid #c8c8c8"></div>
<div class="t" style="left:316.5px;top:153px;font-size:15.5px;color:#a0a0a0;">Month</div>
<div class="abs" style="left:290px;top:181px;width:20px;height:20px;border-radius:10px;background:#f7f7f7;border:1px solid #c8c8c8"></div>
<div class="t" style="left:316.5px;top:184px;font-size:15.5px;color:#a0a0a0;">Year</div>
<div class="abs" style="left:10px;top:231px;width:20px;height:20px;background:#f9f9f9;border:1px solid #787878;border-radius:3.500px"></div>
<div class="t" style="left:36px;top:234px;font-size:15.5px;color:#1a1a1a;"><span style="text-decoration:underline;text-underline-offset:2px">T</span>rend</div>
<div class="t" style="left:10px;top:276.5px;font-size:15.5px;color:#1a1a1a;letter-spacing:-0.250px"><span style="text-decoration:underline;text-underline-offset:2px">S</span>tep value:</div>
<div class="abs" style="left:100px;top:268px;width:97px;height:32px;background:#fff;border:1px solid #c2c2c2;border-bottom:1px solid #868686;border-radius:2px"></div>
<div class="t" style="left:106px;top:274.5px;font-size:15px;color:#1a1a1a;">1</div>
<div class="t" style="left:212px;top:276.5px;font-size:15.5px;color:#1a1a1a;letter-spacing:-0.150px">St<span style="text-decoration:underline;text-underline-offset:2px">o</span>p value:</div>
<div class="abs" style="left:303px;top:268px;width:96px;height:32px;background:#fff;border:1px solid #c2c2c2;border-bottom:1px solid #868686;border-radius:2px"></div>
<div class="t" style="left:309px;top:274.5px;font-size:15px;color:#1a1a1a;">39</div>
<div class="abs" style="left:134px;top:313px;width:124px;height:36px;background:#fbfbfb;border:1.500px solid #0067c0;border-radius:4.500px"></div>
<div class="t" style="left:134px;width:124px;text-align:center;top:323.5px;font-size:15.500px;color:#1a1a1a">OK</div>
<div class="abs" style="left:274px;top:313px;width:124px;height:36px;background:#fbfbfb;border:1px solid #d0d0d0;border-bottom-color:#b8b8b8;border-radius:4.500px"></div>
<div class="t" style="left:274px;width:124px;text-align:center;top:323.5px;font-size:15.500px;color:#1a1a1a">Cancel</div>
<div class="abs" style="left:14px;top:106px;width:113px;height:48px;border:4px solid #ff0000;box-shadow:3px 4px 6px rgba(0,0,0,0.500),inset 3px 4px 6px rgba(0,0,0,0.450)"></div>
<div class="abs" style="left:93px;top:250px;width:316px;height:59px;border:4px solid #ff0000;box-shadow:3px 4px 6px rgba(0,0,0,0.500),inset 3px 4px 6px rgba(0,0,0,0.450)"></div>
</div>

</div>
</body>
</html>
